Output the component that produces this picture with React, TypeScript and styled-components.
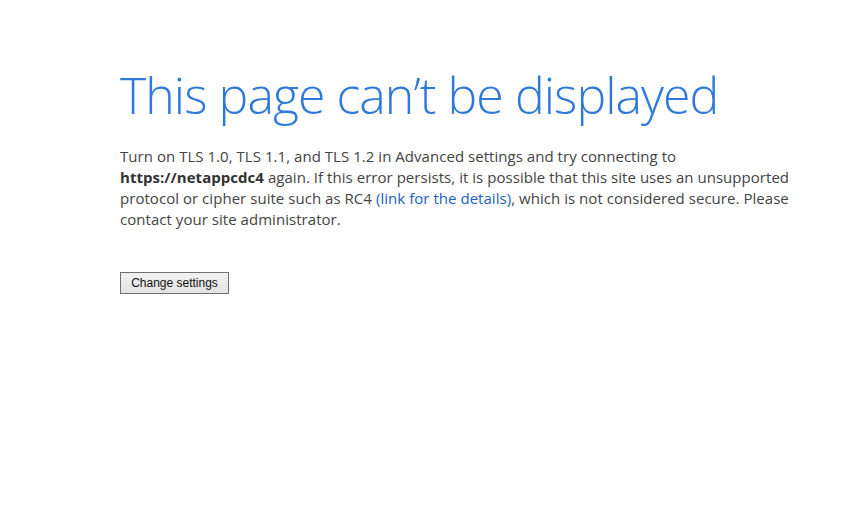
import React from "react";
import styled, { createGlobalStyle } from "styled-components";

const GlobalStyle = createGlobalStyle`
  html, body {
    margin: 0;
    padding: 0;
    background: #fff;
  }
`;

export default function App() {
  return (
    <>
      <GlobalStyle />
      <Page>
        <Title>This page can’t be displayed</Title>
        <Message>
          <Line>Turn on TLS 1.0, TLS 1.1, and TLS 1.2 in Advanced settings and try connecting to</Line>
          <Line>
            <strong>https://netappcdc4</strong> again. If this error persists, it is possible that this site uses an unsupported
          </Line>
          <Line>
            protocol or cipher suite such as RC4 <DetailsLink href="#">(link for the details)</DetailsLink>, which is not considered secure. Please
          </Line>
          <Line>contact your site administrator.</Line>
        </Message>
        <SettingsButton type="button">Change settings</SettingsButton>
      </Page>
    </>
  );
}

const Page = styled.main`
  padding: 62px 0 0 120px;
  width: 857px;
  height: 509px;
  box-sizing: border-box;
  display: flex;
  flex-direction: column;
  align-items: flex-start;
`;

const Title = styled.h1`
  margin: 0;
  font-family: "Open Sans", "Noto Sans", sans-serif;
  font-weight: 300;
  font-size: 50px;
  line-height: 66px;
  letter-spacing: -0.95px;
  color: #2f78dc;
  white-space: nowrap;
`;

const Message = styled.div`
  margin-top: 18px;
  font-family: "Open Sans", "Noto Sans", sans-serif;
  font-size: 15px;
  line-height: 21px;
  letter-spacing: 0.04px;
  color: #444;
  strong {
    font-weight: 700;
    color: #333;
  }
`;

const Line = styled.div`
  white-space: nowrap;
`;

const DetailsLink = styled.a`
  color: #1a62c0;
  text-decoration: none;
`;

const SettingsButton = styled.button`
  margin-top: 42px;
  width: 109px;
  height: 22px;
  padding: 0;
  font-family: "Liberation Sans", Arial, sans-serif;
  font-size: 12px;
  color: #111;
  background: linear-gradient(#f2f2f2, #e2e2e2);
  border: 1px solid #707070;
  border-radius: 0;
`;
